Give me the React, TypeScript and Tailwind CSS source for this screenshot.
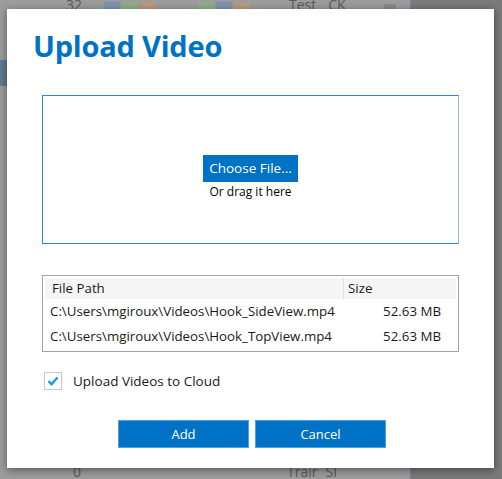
const files = [
  { path: "C:\\Users\\mgiroux\\Videos\\Hook_SideView.mp4", size: "52.63 MB" },
  { path: "C:\\Users\\mgiroux\\Videos\\Hook_TopView.mp4", size: "52.63 MB" },
];

function Backdrop() {
  return (
    <div className="absolute inset-0 flex">
      <div className="relative w-[410px] bg-[#9c9c9c]">
        <div className="absolute left-0 top-[60px] h-[26px] w-[7px] bg-[#5f7a94]" />
        <div className="flex h-[9px] items-end text-[14px] leading-none text-[#5a5a5a]">
          <span className="ml-[66px] -mb-[3px]">32</span>
          <span className="ml-[22px] h-[7px] w-[16px] bg-[#7d95ad]" />
          <span className="ml-[2px] h-[7px] w-[16px] bg-[#8fae88]" />
          <span className="ml-[2px] h-[7px] w-[16px] bg-[#b79b80]" />
          <span className="ml-[42px] h-[7px] w-[16px] bg-[#8fae88]" />
          <span className="ml-[2px] h-[7px] w-[16px] bg-[#7d95ad]" />
          <span className="ml-[2px] h-[7px] w-[16px] bg-[#b79b80]" />
          <span className="ml-[39px] -mb-[3px]">Test</span>
          <span className="ml-[12px] -mb-[3px]">CK</span>
          <span className="ml-[38px] h-[5px] w-[12px] bg-[#8a8a8a]" />
        </div>
        <div className="absolute bottom-0 left-0 flex h-[12px] w-full items-start text-[14px] leading-none text-[#5a5a5a]">
          <span className="ml-[73px] -mt-[2px]">0</span>
          <span className="ml-[206px] -mt-[2px]">Trair</span>
          <span className="ml-[8px] -mt-[2px]">SI</span>
        </div>
      </div>
      <div className="w-[1px] bg-[#6b86a3]" />
      <div className="flex-1 bg-[#7a7a7a]" />
    </div>
  );
}

export default function App() {
  return (
    <div
      className="relative h-[479px] w-[502px] overflow-hidden"
      style={{ fontFamily: '"Open Sans", "Noto Sans", sans-serif' }}
    >
      <Backdrop />
      <div className="absolute left-[7px] top-[9px] flex h-[459px] w-[487px] flex-col bg-white shadow-[0_2px_8px_rgba(0,0,0,0.45)]">
        <h1 className="ml-[26px] mt-[18px] text-[29px] font-bold leading-[38px] tracking-[-0.2px] text-[#0072c6]">
          Upload Video
        </h1>

        <div className="mx-[35px] mt-[30px] flex h-[149px] flex-col items-center justify-center border border-[#2b86d6] border-r-[#8cbde8]">
          <button className="mt-[16px] h-[27px] w-[95px] bg-[#0072c6] text-[13.5px] text-white">
            Choose File...
          </button>
          <span className="mt-[1px] text-[12px] leading-[18px] text-black">Or drag it here</span>
        </div>

        <div className="mx-[35px] mt-[31px] border border-[#a3a3a3] px-[2px] pb-[2px] pt-[2px] text-[13.3px] text-[#1a1a1a]">
          <div className="flex h-[21px] items-center bg-[#f5f5f5]">
            <span className="w-[298px] pl-[7px]">File Path</span>
            <span className="h-full w-[1px] bg-[#e0e0e0]" />
            <span className="pl-[4px]">Size</span>
          </div>
          {files.map((f) => (
            <div key={f.path} className="flex h-[25px] items-center">
              <span className="w-[299px] whitespace-nowrap pl-[5px]">{f.path}</span>
              <span className="flex-1 pr-[15px] text-right">{f.size}</span>
            </div>
          ))}
        </div>

        <label className="ml-[37px] mt-[19px] flex items-center text-[13.5px] text-[#1a1a1a]">
          <span className="flex h-[18px] w-[18px] items-center justify-center border border-[#c8c8c8] bg-white">
            <svg width="12" height="10" viewBox="0 0 12 10">
              <path d="M1.5 5.2 L4.5 8.2 L10.5 1.5" fill="none" stroke="#1a9be0" strokeWidth="2.4" />
            </svg>
          </span>
          <span className="ml-[11px]">Upload Videos to Cloud</span>
        </label>

        <div className="mt-[29px] flex justify-center gap-[6px] pl-[3px]">
          <button className="h-[28px] w-[131px] border border-[#4ca3e8] bg-[#0072c6] text-[13px] text-white">
            Add
          </button>
          <button className="h-[28px] w-[131px] border border-[#4ca3e8] bg-[#0072c6] text-[13px] text-white">
            Cancel
          </button>
        </div>
      </div>
    </div>
  );
}
